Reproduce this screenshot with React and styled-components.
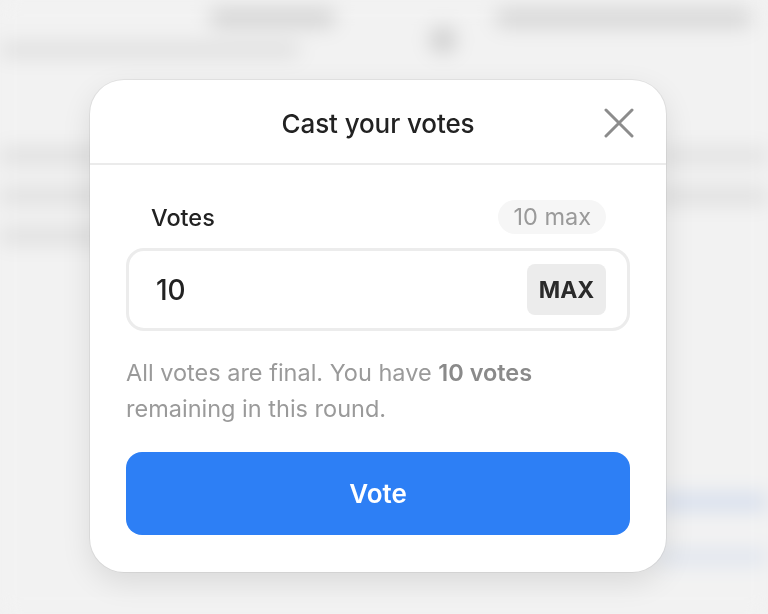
import React from "react";
import styled, { createGlobalStyle } from "styled-components";

const Global = createGlobalStyle`
  html, body { margin: 0; padding: 0; }
  body {
    font-family: Inter, "Noto Sans", "Liberation Sans", sans-serif;
    background: #f2f2f2;
    overflow: hidden;
  }
  * { box-sizing: border-box; }
`;

const Backdrop = styled.div`
  width: 768px;
  height: 614px;
  background: #f2f2f2;
  overflow: hidden;
  filter: blur(10px);
  display: flex;
  flex-direction: column;
`;

const TopRow = styled.div`
  display: flex;
  align-items: flex-start;
  padding: 9px 0 0 210px;
  height: 44px;
`;

const Blob = styled.div`
  width: ${(p) => p.$w}px;
  height: ${(p) => p.$h || 14}px;
  margin-left: ${(p) => p.$ml || 0}px;
  margin-top: ${(p) => p.$mt || 0}px;
  background: ${(p) => p.$c || "#d6d6d6"};
  border-radius: ${(p) => (p.$round ? "50%" : "6px")};
  flex-shrink: 0;
`;

const Lines = styled.div`
  display: flex;
  justify-content: space-between;
  padding-top: ${(p) => p.$pt || 0}px;
`;

const Col = styled.div`
  display: flex;
  flex-direction: column;
  gap: ${(p) => p.$gap || 26}px;
  align-items: ${(p) => p.$align || "flex-start"};
`;

const Overlay = styled.div`
  position: fixed;
  inset: 0;
  display: flex;
  justify-content: center;
  align-items: flex-start;
  padding-top: 80px;
  padding-right: 12px;
`;

const Modal = styled.div`
  width: 576px;
  height: 492px;
  background: #fff;
  border-radius: 34px;
  box-shadow: 0 0 0 1px rgba(0, 0, 0, 0.06), 0 10px 30px rgba(0, 0, 0, 0.1);
  display: flex;
  flex-direction: column;
  overflow: hidden;
`;

const Header = styled.div`
  height: 85px;
  border-bottom: 2px solid #ebebeb;
  display: grid;
  grid-template-columns: 64px 1fr 64px;
  align-items: center;
  padding-top: 3px;
`;

const Title = styled.h2`
  grid-column: 2;
  margin: 0;
  text-align: center;
  font-size: 26px;
  font-weight: 500;
  color: #222;
  letter-spacing: -0.1px;
`;

const Close = styled.button`
  grid-column: 3;
  justify-self: start;
  width: 30px;
  height: 30px;
  padding: 0;
  border: none;
  background: none;
  display: flex;
  align-items: center;
  justify-content: center;
  margin-left: 2px;
  cursor: pointer;
`;

const Body = styled.div`
  padding: 35px 36px 36px;
  display: flex;
  flex-direction: column;
`;

const LabelRow = styled.div`
  display: flex;
  justify-content: space-between;
  align-items: center;
  padding: 0 24px 0 25px;
  margin-bottom: 14px;
`;

const Label = styled.span`
  font-size: 23.5px;
  font-weight: 500;
  color: #222;
`;

const Pill = styled.span`
  font-size: 23.5px;
  color: #9a9a9a;
  background: #f6f6f6;
  border-radius: 18px;
  padding: 3px 15px;
  line-height: 28px;
`;

const InputBox = styled.div`
  height: 83px;
  border: 3px solid #ececec;
  border-radius: 18px;
  display: flex;
  align-items: center;
  padding: 0 21px 0 27px;
`;

const Value = styled.span`
  flex: 1;
  font-size: 28px;
  font-weight: 500;
  color: #222;
`;

const MaxButton = styled.button`
  width: 79px;
  height: 51px;
  border: none;
  border-radius: 8px;
  background: #ececec;
  font-family: inherit;
  font-size: 23px;
  font-weight: 700;
  color: #2a2a2a;
  padding: 0;
`;

const Help = styled.p`
  margin: 24px 0 25px;
  font-size: 23.5px;
  line-height: 36px;
  color: #9a9a9a;
  strong {
    font-weight: 600;
    color: #8a8a8a;
  }
`;

const VoteButton = styled.button`
  height: 83px;
  border: none;
  border-radius: 16px;
  background: #2d7ff5;
  color: #fff;
  font-family: inherit;
  font-size: 26px;
  font-weight: 600;
  cursor: pointer;
`;

export default function App() {
  return (
    <>
      <Global />
      <Backdrop>
        <TopRow>
          <Blob $w={125} $h={18} $c="#d2d2d2" />
          <Blob $w={26} $h={26} $round $ml={95} $mt={18} $c="#cccccc" />
          <Blob $w={255} $h={18} $ml={40} $c="#d4d4d4" />
        </TopRow>
        <Blob $w={300} $h={12} $c="#d9d9d9" $mt={0} />
        <Lines $pt={92}>
          <Col $gap={24}>
            <Blob $w={110} $h={16} $c="#dedede" />
            <Blob $w={110} $h={16} $c="#dedede" />
            <Blob $w={110} $h={16} $c="#dedede" />
          </Col>
          <Col $gap={24} $align="flex-end">
            <Blob $w={110} $h={16} $c="#e0e0e0" />
            <Blob $w={110} $h={16} $c="#dedede" />
          </Col>
        </Lines>
        <Lines $pt={250}>
          <span />
          <Col $gap={40} $align="flex-end">
            <Blob $w={110} $h={16} $c="#d3dcec" />
            <Blob $w={110} $h={14} $c="#dde3ee" />
          </Col>
        </Lines>
      </Backdrop>
      <Overlay>
        <Modal>
          <Header>
            <Title>Cast your votes</Title>
            <Close aria-label="Close">
              <svg width="30" height="30" viewBox="0 0 30 30">
                <path d="M2 2 L28 28 M28 2 L2 28" stroke="#8c8c8c" strokeWidth="3" strokeLinecap="round" />
              </svg>
            </Close>
          </Header>
          <Body>
            <LabelRow>
              <Label>Votes</Label>
              <Pill>10 max</Pill>
            </LabelRow>
            <InputBox>
              <Value>10</Value>
              <MaxButton>MAX</MaxButton>
            </InputBox>
            <Help>
              All votes are final. You have <strong>10 votes</strong> remaining in this round.
            </Help>
            <VoteButton>Vote</VoteButton>
          </Body>
        </Modal>
      </Overlay>
    </>
  );
}
